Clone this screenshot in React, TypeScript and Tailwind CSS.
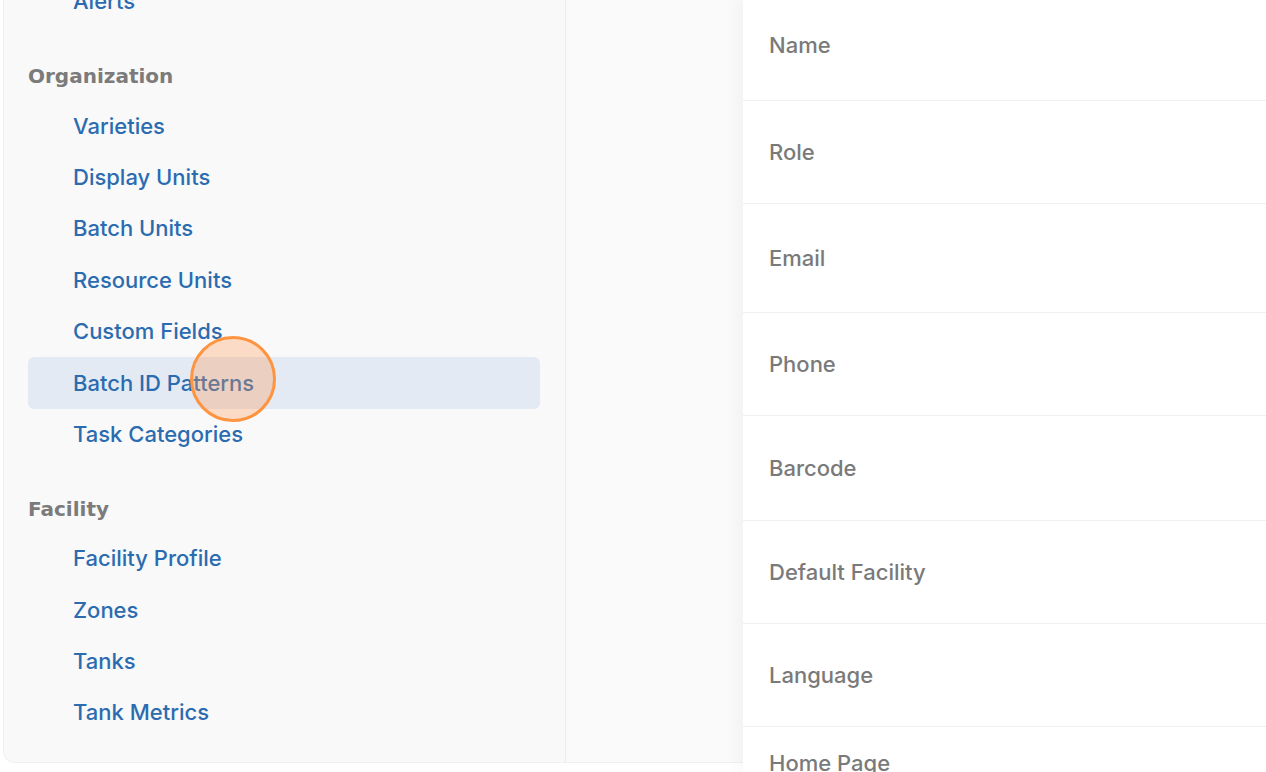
import React from "react";

const organization = [
  "Varieties",
  "Display Units",
  "Batch Units",
  "Resource Units",
  "Custom Fields",
  "Batch ID Patterns",
  "Task Categories",
];

const facility = ["Facility Profile", "Zones", "Tanks", "Tank Metrics"];

const fields = [
  { label: "Name", h: "h-[101px]", pad: "pb-[10px]" },
  { label: "Role", h: "h-[103px]", pad: "" },
  { label: "Email", h: "h-[109px]", pad: "" },
  { label: "Phone", h: "h-[103px]", pad: "" },
  { label: "Barcode", h: "h-[105px]", pad: "" },
  { label: "Default Facility", h: "h-[103px]", pad: "" },
  { label: "Language", h: "h-[103px]", pad: "" },
];

function NavItem({ label, active }: { label: string; active?: boolean }) {
  return (
    <div
      className={`flex h-[51.4px] items-center rounded-[6px] pl-[45px] ${
        active ? "bg-[#e3eaf3]" : ""
      }`}
    >
      <span className="text-[22px] font-medium text-[#2b6cb0]">{label}</span>
    </div>
  );
}

function SectionTitle({ children }: { children: React.ReactNode }) {
  return (
    <div
      className="flex h-[30px] items-center text-[20px] font-bold text-[#7b7b7b]"
      style={{ fontFamily: '"DejaVu Sans", sans-serif' }}
    >
      {children}
    </div>
  );
}

export default function App() {
  return (
    <div
      className="relative h-[772px] w-[1266px] overflow-hidden bg-white"
      style={{ fontFamily: 'Inter, "Noto Sans", sans-serif' }}
    >
      {/* page card */}
      <div className="ml-[3px] flex h-[763px] overflow-hidden rounded-b-[12px] border-x border-b border-[#f0f0f0] bg-[#f9f9f9]">
        {/* settings sidebar */}
        <aside className="w-[562px] shrink-0 border-r border-[#ebebeb] pl-[24px] pr-[25px]">
          <div className="-mt-[24px]">
            <NavItem label="Alerts" />
            <div className="mt-[34px] mb-[9px]">
              <SectionTitle>Organization</SectionTitle>
            </div>
            {organization.map((item) => (
              <NavItem key={item} label={item} active={item === "Batch ID Patterns"} />
            ))}
            <div className="mt-[34px] mb-[9px]">
              <SectionTitle>Facility</SectionTitle>
            </div>
            {facility.map((item) => (
              <NavItem key={item} label={item} />
            ))}
          </div>
        </aside>
        <main className="flex-1 bg-[#fafafa]" />
      </div>

      {/* drawer */}
      <div className="absolute bottom-0 left-[743px] right-0 top-0 bg-white shadow-[-6px_0_14px_rgba(0,0,0,0.035)]">
        {fields.map((f) => (
          <div
            key={f.label}
            className={`flex items-center border-b border-[#efefef] pl-[26px] ${f.h} ${f.pad}`}
          >
            <span className="text-[22px] font-medium text-[#7a7a7a]">{f.label}</span>
          </div>
        ))}
        <div className="pl-[26px] pt-[20px]">
          <span className="text-[22px] font-medium text-[#7a7a7a]">Home Page</span>
        </div>
      </div>

      {/* click indicator */}
      <div className="absolute left-[190px] top-[336px] h-[86px] w-[86px] rounded-full border-[3px] border-[#ff9440] bg-[rgba(255,150,80,0.3)]" />
    </div>
  );
}
